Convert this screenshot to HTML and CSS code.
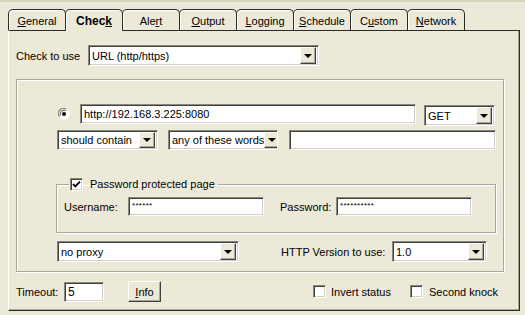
FILE: index.html
```html
<!DOCTYPE html>
<html lang="en">
<head>
    <meta charset="UTF-8">
    <title>Check settings</title>
    <link rel="stylesheet" href="styles.css">
</head>
<body>
    <div class="window">
        <div class="tabs">
            <div class="tab"><u>G</u>eneral</div>
            <div class="tab active">Chec<u>k</u></div>
            <div class="tab">Ale<u>r</u>t</div>
            <div class="tab"><u>O</u>utput</div>
            <div class="tab"><u>L</u>ogging</div>
            <div class="tab"><u>S</u>chedule</div>
            <div class="tab">C<u>u</u>stom</div>
            <div class="tab"><u>N</u>etwork</div>
        </div>

        <div class="panel">
            <div class="row check-row">
                <span class="label check-label">Check to use</span>
                <div class="combo combo-check">
                    <span class="combo-text">URL (http/https)</span>
                    <span class="combo-btn"></span>
                </div>
            </div>

            <div class="url-box">
                <div class="row url-row">
                    <span class="radio-wrap">
                        <svg class="radio" width="12" height="12" viewBox="0 0 12 12">
                            <circle cx="6" cy="6" r="5.5" fill="#fff"/>
                            <path d="M1.2 8.5 A5.3 5.3 0 0 1 8.5 1.2" stroke="#8a887c" stroke-width="1.2" fill="none"/>
                            <path d="M2.3 7.6 A4.2 4.2 0 0 1 7.6 2.3" stroke="#404040" stroke-width="1" fill="none"/>
                            <circle cx="6" cy="6" r="2" fill="#000"/>
                        </svg>
                    </span>
                    <div class="field url-field">http://192.168.3.225:8080</div>
                    <div class="combo combo-method">
                        <span class="combo-text">GET</span>
                        <span class="combo-btn"></span>
                    </div>
                </div>

                <div class="row match-row">
                    <div class="combo combo-contain">
                        <span class="combo-text">should contain</span>
                        <span class="combo-btn"></span>
                    </div>
                    <div class="combo combo-words">
                        <span class="combo-text">any of these words</span>
                        <span class="combo-btn"></span>
                    </div>
                    <div class="field words-field"></div>
                </div>

                <fieldset class="auth-group">
                    <legend class="auth-legend">
                        <span class="checkbox checked">
                            <svg width="9" height="9" viewBox="0 0 9 9">
                                <path d="M1 4 L3.3 6.4 L8 1.6" stroke="#000" stroke-width="1.8" fill="none"/>
                            </svg>
                        </span>
                        <span>Password protected page</span>
                    </legend>
                    <div class="row auth-row">
                        <span class="label user-label">Username:</span>
                        <div class="field auth-field mask">******</div>
                        <span class="label pass-label">Password:</span>
                        <div class="field auth-field mask">**********</div>
                    </div>
                </fieldset>

                <div class="row proxy-row">
                    <div class="combo combo-proxy">
                        <span class="combo-text">no proxy</span>
                        <span class="combo-btn"></span>
                    </div>
                    <span class="label http-label">HTTP Version to use:</span>
                    <div class="combo combo-http">
                        <span class="combo-text">1.0</span>
                        <span class="combo-btn"></span>
                    </div>
                </div>
            </div>

            <div class="row bottom-row">
                <span class="label timeout-label">Timeout:</span>
                <div class="field timeout-field">5</div>
                <button class="btn info-btn"><u>I</u>nfo</button>
                <span class="check-option invert">
                    <span class="checkbox"></span>
                    <span>Invert status</span>
                </span>
                <span class="check-option knock">
                    <span class="checkbox"></span>
                    <span>Second knock</span>
                </span>
            </div>
        </div>
    </div>
</body>
</html>
```

FILE: styles.css
```css
* {
    margin: 0;
    padding: 0;
    box-sizing: border-box;
}

body {
    font-family: "Liberation Sans", Arial, sans-serif;
    font-size: 11px;
    color: #000;
    background: #ece9d8;
    width: 525px;
    height: 315px;
    overflow: hidden;
}

.window {
    border-top: 2px solid #d9d5bd;
    padding: 7px 0 0 8px;
}

u {
    text-decoration: underline;
    text-underline-offset: 1px;
}

/* tabs */

.tabs {
    display: flex;
    height: 21px;
    align-items: flex-start;
}

.tab {
    width: 58px;
    height: 21px;
    margin-left: -1px;
    border: 1px solid #2b2b2b;
    border-bottom: none;
    border-radius: 5px 5px 0 0;
    background: #ece9d8;
    box-shadow: inset 1px 1px 0 #fff;
    display: flex;
    align-items: center;
    justify-content: center;
    padding-top: 1px;
}

.tab:first-child {
    margin-left: 0;
}

.tab.active {
    height: 22px;
    font-weight: bold;
    position: relative;
    z-index: 1;
    font-size: 12px;
}

/* main panel */

.panel {
    width: 512px;
    height: 281px;
    border-top: 1px solid #2b2b2b;
    border-left: 1px solid #fff;
    border-right: 1px solid #2b2b2b;
    border-bottom: 1px solid #2b2b2b;
    box-shadow: inset -1px -1px 0 #aca899;
    padding: 14px 0 0 7px;
}

.row {
    display: flex;
    align-items: center;
}

.check-label {
    width: 72px;
}

/* sunken text fields and combos */

.field,
.combo {
    background: #fff;
    border: 1px solid;
    border-color: #8a887c #fff #fff #8a887c;
    box-shadow: inset 1px 1px 0 #404040, inset -1px -1px 0 #d4d0c8;
    height: 20px;
    padding: 0 3px;
    display: flex;
    align-items: center;
    white-space: nowrap;
    overflow: hidden;
}

.combo {
    height: 21px;
    padding: 0 2px 0 3px;
    justify-content: space-between;
}

.combo-btn {
    width: 16px;
    height: 17px;
    background: #ece9d8;
    border: 1px solid;
    border-color: #fff #404040 #404040 #fff;
    box-shadow: inset -1px -1px 0 #aca899;
    display: flex;
    align-items: center;
    justify-content: center;
    flex-shrink: 0;
}

.combo-btn::after {
    content: "";
    border-left: 4px solid transparent;
    border-right: 4px solid transparent;
    border-top: 4px solid #000;
    margin-left: -1px;
}

.combo-check {
    width: 231px;
}

/* URL group */

.url-box {
    width: 488px;
    margin: 13px 0 0 0;
    border: 1px solid #aca899;
    box-shadow: 1px 1px 0 #fff, inset 1px 1px 0 #fff;
    padding: 24px 0 9px 40px;
}

.url-row {
    align-items: flex-start;
}

.radio-wrap {
    width: 23px;
    height: 20px;
    display: flex;
    align-items: center;
    padding-left: 1px;
}

.url-field {
    width: 336px;
}

.combo-method {
    width: 71px;
    margin: 1px 0 0 8px;
}

.match-row {
    margin-top: 4px;
}

.combo-contain {
    width: 101px;
    height: 20px;
}

.combo-words {
    width: 110px;
    height: 20px;
    margin-left: 10px;
}

.combo-contain .combo-btn,
.combo-words .combo-btn {
    height: 16px;
}

.words-field {
    width: 207px;
    margin-left: 11px;
}

/* password group */

.auth-group {
    width: 440px;
    margin: 27px 0 0 -1px;
    border: 1px solid #aca899;
    box-shadow: 1px 1px 0 #fff, inset 1px 1px 0 #fff;
    padding: 0 0 16px 7px;
}

.auth-legend {
    display: flex;
    align-items: center;
    gap: 7px;
    margin-left: 5px;
    padding: 0 3px 0 1px;
    height: 14px;
}

.checkbox {
    width: 13px;
    height: 13px;
    background: #fff;
    border: 1px solid;
    border-color: #8a887c #fff #fff #8a887c;
    box-shadow: inset 1px 1px 0 #404040, inset -1px -1px 0 #d4d0c8;
    display: inline-flex;
    align-items: center;
    justify-content: center;
    flex-shrink: 0;
}

.auth-row {
    margin-top: 6px;
}

.user-label {
    width: 64px;
}

.auth-field {
    width: 136px;
    height: 19px;
    font-size: 8px;
    letter-spacing: 0.3px;
    align-items: flex-start;
    padding-top: 3px;
}

.pass-label {
    margin-left: 16px;
    width: 56px;
}

/* proxy row */

.proxy-row {
    margin-top: 8px;
}

.combo-proxy {
    width: 182px;
}

.http-label {
    margin-left: 42px;
    width: 111px;
}

.combo-http {
    width: 95px;
}

/* bottom row */

.bottom-row {
    margin-top: 9px;
}

.timeout-label {
    width: 48px;
}

.timeout-field {
    width: 40px;
    font-size: 12px;
}

.btn {
    font: inherit;
    font-size: 11px;
    width: 33px;
    height: 21px;
    margin-left: 24px;
    background: #ece9d8;
    border: 1px solid;
    border-color: #fff #404040 #404040 #fff;
    box-shadow: inset -1px -1px 0 #aca899;
}

.check-option {
    display: flex;
    align-items: center;
    gap: 5px;
}

.invert {
    margin-left: 152px;
}

.knock {
    margin-left: 19px;
    gap: 6px;
}
```
